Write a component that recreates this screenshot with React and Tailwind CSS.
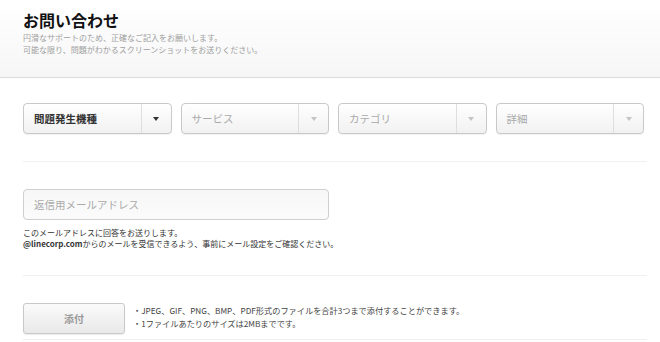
const SELECTS = [
  { label: '問題発生機種', active: true },
  { label: 'サービス' },
  { label: 'カテゴリ' },
  { label: '詳細' },
];

function Select({ label, active }) {
  return (
    <div className="flex h-[31px] rounded-[4px] border border-[#c9c9c9] bg-gradient-to-b from-white to-[#f1f1f1] shadow-[0_1px_1px_rgba(0,0,0,0.06)]">
      <div
        className={
          'flex flex-1 items-center pl-[10px] text-[10.5px] ' +
          (active ? 'font-bold text-[#333]' : 'text-[#aaa]')
        }
      >
        {label}
      </div>
      <div className="flex w-[30px] items-center justify-center border-l border-[#dedede]">
        <span
          className={
            'h-0 w-0 border-x-[3.5px] border-t-[4px] border-x-transparent ' +
            (active ? 'border-t-[#333]' : 'border-t-[#c4c4c4]')
          }
        />
      </div>
    </div>
  );
}

export default function App() {
  return (
    <div className="h-[342px] w-[660px] overflow-hidden bg-white font-['Noto_Sans_CJK_JP',sans-serif] text-[#333]">
      <header className="h-[78px] border-b border-[#dcdcdc] bg-gradient-to-b from-white to-[#f6f6f6] px-[23px] pt-[10px]">
        <h1 className="text-[16px] font-bold leading-[20px] text-[#111]">お問い合わせ</h1>
        <p className="mt-[2px] text-[8px] leading-[12px] text-[#9e9e9e]">
          円滑なサポートのため、正確なご記入をお願いします。
          <br />
          可能な限り、問題がわかるスクリーンショットをお送りください。
        </p>
      </header>

      <main className="px-[23px] pt-[25px]">
        <div className="grid w-[621px] grid-cols-4 gap-[9px]">
          {SELECTS.map((s) => (
            <Select key={s.label} {...s} />
          ))}
        </div>

        <div className="mt-[27px] h-px w-[624px] bg-[#f0f0f0]" />

        <div className="mt-[27px] flex h-[31px] w-[306px] items-center rounded-[4px] border border-[#cfcfcf] bg-gradient-to-b from-[#f7f7f7] to-[#fbfbfb] pl-[10px] text-[10.5px] text-[#aaa]">
          返信用メールアドレス
        </div>
        <p className="mt-[7px] text-[8px] leading-[11px] text-[#333]">
          このメールアドレスに回答をお送りします。
          <br />
          <span className="font-bold">@linecorp.com</span>
          からのメールを受信できるよう、事前にメール設定をご確認ください。
        </p>

        <div className="mt-[26px] h-px w-[624px] bg-[#f0f0f0]" />

        <div className="mt-[27px] flex items-start gap-[8px]">
          <button className="flex h-[31px] w-[102px] items-center justify-center rounded-[3px] border border-[#c9c9c9] bg-gradient-to-b from-[#fafafa] to-[#e9e9e9] text-[10px] font-bold text-[#9a9a9a] shadow-[0_1px_1px_rgba(0,0,0,0.08)]">
            添付
          </button>
          <ul className="pt-[1px] text-[8.2px] leading-[13px] text-[#444]">
            <li>・JPEG、GIF、PNG、BMP、PDF形式のファイルを合計3つまで添付することができます。</li>
            <li>・1ファイルあたりのサイズは2MBまでです。</li>
          </ul>
        </div>

        <div className="mt-[5px] h-px w-[624px] bg-[#f0f0f0]" />
      </main>
    </div>
  );
}
